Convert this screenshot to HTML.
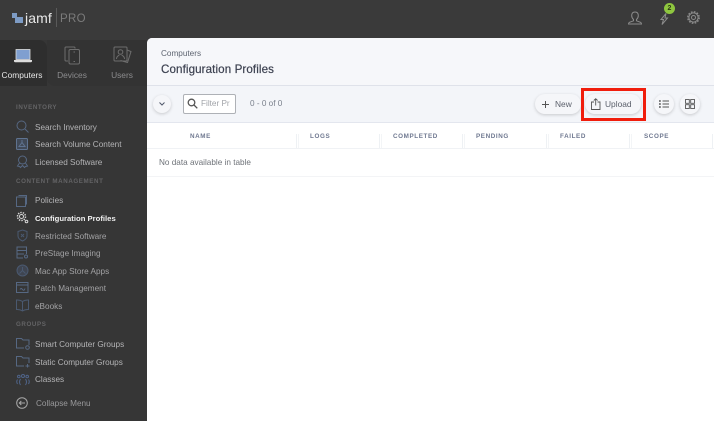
<!DOCTYPE html>
<html><head><meta charset="utf-8"><style>
html,body{margin:0;padding:0}
body{width:714px;height:421px;overflow:hidden;position:relative;background:#3a3a3a;font-family:"Liberation Sans",sans-serif}
#w{left:0;top:0;width:714px;height:421px;overflow:hidden;filter:blur(.3px)}
div,span{position:absolute;white-space:nowrap}
svg{position:absolute;overflow:visible;fill:none}
.n{left:35px;font-size:8.2px;color:#b4b4b6;line-height:10px}
.h{left:16px;font-size:6.2px;letter-spacing:.6px;color:#646466;font-weight:bold;line-height:8px}
.t{font-size:8.4px;line-height:10px;text-align:center}
.c{top:131px;font-size:6.3px;font-weight:bold;letter-spacing:.6px;color:#6f7890;line-height:8px}
.s{top:134px;height:14px;border-left:1px solid #eef1f4;border-right:1px solid #f3f5f7;box-sizing:content-box;width:1px}
.b{background:#f5f6f9;border-radius:50%;box-shadow:0 1px 3px rgba(0,0,0,.18)}
</style></head><body><div id="w">
<!-- tabs & sidebar -->
<div style="left:0;top:40px;width:147px;height:381px;background:#363636"></div>
<div style="left:47px;top:40px;width:100px;height:46px;background:#333;border-radius:0 0 0 8px"></div>
<div style="left:0;top:40px;width:47px;height:46px;background:#2e2e2e;border-radius:0 8px 0 0"></div>
<!-- logo -->
<svg style="left:12px;top:12px" width="12" height="12"><path d="M0 1h5v4h6v6H3V6H0z" fill="#7d9bc4"/></svg>
<div style="left:25px;top:9px;font-size:14px;line-height:18px;color:#e8e8e8;letter-spacing:.1px">jamf</div>
<div style="left:56px;top:8px;width:1px;height:19px;background:#5a5a5a"></div>
<div style="left:60px;top:13px;font-size:11.5px;line-height:13px;color:#7b7b7b;letter-spacing:.3px">PRO</div>
<!-- tab icons -->
<svg style="left:14px;top:49px" width="18" height="14"><rect x="2" y=".5" width="14" height="10" fill="#7f9fd0" stroke="#ddd" stroke-width=".8"/><path d="M0 11h18v1.300q0 .9-1 .9H1q-1 0-1-.9z" fill="#ddd"/></svg>
<svg style="left:64px;top:46px" width="17" height="19" stroke="#6e6e6e" stroke-width="1"><path d="M11 2.500V2q0-1-1-1H2q-1 0-1 1v12q0 1 1 1h2"/><rect x="5" y="3.500" width="10.500" height="14.500" rx="1.500"/><path d="M9.500 6h1.500M9.500 15.500h1.500"/></svg>
<svg style="left:113px;top:46px" width="19" height="19" stroke="#6e6e6e" stroke-width="1"><rect x="1" y="1" width="13" height="14" rx="1"/><circle cx="7.500" cy="6" r="2.300"/><path d="M3.500 13c0-3 2-3 2.800-4M11.500 13c0-3-2-3-2.800-4M14 4l4 1.500-3.500 11-7-2"/></svg>
<div class="t" style="left:0;top:70px;width:44px;color:#e6e6e6">Computers</div>
<div class="t" style="left:52px;top:70px;width:40px;color:#8c8c8e">Devices</div>
<div class="t" style="left:102px;top:70px;width:40px;color:#8c8c8e">Users</div>
<!-- sidebar text -->
<div class="h" style="top:104px">INVENTORY</div>
<div class="n" style="top:123px">Search Inventory</div>
<div class="n" style="top:140px">Search Volume Content</div>
<div class="n" style="top:158px">Licensed Software</div>
<div class="h" style="top:178px">CONTENT MANAGEMENT</div>
<div class="n" style="top:196px">Policies</div>
<div class="n" style="top:214px;color:#f0f0f0;font-weight:bold;font-size:7.7px">Configuration Profiles</div>
<div class="n" style="top:232px;color:#a2a2a4">Restricted Software</div>
<div class="n" style="top:249px;color:#a2a2a4">PreStage Imaging</div>
<div class="n" style="top:267px;color:#a2a2a4">Mac App Store Apps</div>
<div class="n" style="top:284px;color:#a2a2a4">Patch Management</div>
<div class="n" style="top:302px;color:#a2a2a4">eBooks</div>
<div class="h" style="top:321px">GROUPS</div>
<div class="n" style="top:340px">Smart Computer Groups</div>
<div class="n" style="top:358px">Static Computer Groups</div>
<div class="n" style="top:375px">Classes</div>
<div class="n" style="left:36px;top:399px;color:#99999b">Collapse Menu</div>
<!-- sidebar icons -->
<svg style="left:16px;top:120px" width="13" height="13" stroke="#566883" stroke-width="1"><circle cx="5.500" cy="5.500" r="4.500"/><path d="M9 9l3.500 3.500"/></svg>
<svg style="left:16px;top:138px" width="12" height="12" stroke="#5f7390" stroke-width="1"><rect x=".5" y=".5" width="11" height="11" rx="1" fill="#414a58"/><path d="M3 8.500l3-4 3 4zM6 2v3"/></svg>
<svg style="left:16px;top:155px" width="13" height="13" stroke="#566883" stroke-width="1"><circle cx="6.500" cy="5" r="4"/><path d="M3.500 8l-2 3 2 .5 1 1 2-2 2 2 1-1 2-.5-2-3"/></svg>
<svg style="left:16px;top:194px" width="12" height="13" stroke="#566883" stroke-width="1"><rect x=".5" y="3" width="9" height="9.500"/><path d="M2.500 1.500h8v9"/></svg>
<svg style="left:16px;top:211px" width="13" height="13" stroke="#d8d8d8" fill="none"><circle cx="5.500" cy="5.500" r="2" stroke-width="1"/><circle cx="5.500" cy="5.500" r="4" stroke-width="1.500" stroke-dasharray="1.400 1.100"/><circle cx="10.500" cy="10.500" r="1.300" stroke-width="1"/></svg>
<svg style="left:17px;top:229px" width="11" height="13" stroke="#4a5970" stroke-width="1"><path d="M5.500 1l4.500 1.500V7q0 3-4.500 5Q1 10 1 7V2.500z"/><path d="M4 5l3 3M7 5L4 8"/></svg>
<svg style="left:16px;top:246px" width="13" height="13" stroke="#566883" stroke-width="1"><path d="M7 12H1V1h9.500v7M1 4.500h9.500M1 8h7"/><circle cx="10" cy="10.500" r="1.500"/></svg>
<svg style="left:16px;top:264px" width="13" height="13" stroke="#4a5970" stroke-width="1"><circle cx="6.500" cy="6.500" r="5.500" fill="#3f4551"/><path d="M6.500 3v3.500L3.500 9.500M6.500 6.500l3 3"/></svg>
<svg style="left:16px;top:282px" width="13" height="12" stroke="#566883" stroke-width="1"><rect x=".5" y=".5" width="11.500" height="10"/><path d="M.5 3h11.500M4 7.500q1-2 2.500 0t2.500-1"/></svg>
<svg style="left:16px;top:299px" width="13" height="12" stroke="#4a5970" stroke-width="1"><path d="M6.500 2.500Q4 .8.500 1v9.500q3.500-.2 6 1.500 2.500-1.700 6-1.500V1Q9 .8 6.500 2.500zM6.500 2.500V12"/></svg>
<svg style="left:16px;top:337px" width="15" height="13" stroke="#566883" stroke-width="1"><path d="M8 11H.5V1.500h5L7 3h6v5"/><circle cx="11.500" cy="10.500" r="1.800"/></svg>
<svg style="left:16px;top:355px" width="15" height="13" stroke="#566883" stroke-width="1"><path d="M8 11H.5V1.500h5L7 3h6v5M11.500 9v3.500M9.500 11h4"/></svg>
<svg style="left:16px;top:373px" width="14" height="13" stroke="#4f6489" stroke-width="1"><circle cx="7" cy="3" r="1.500"/><circle cx="2.800" cy="3.500" r="1.300"/><circle cx="11.200" cy="3.500" r="1.300"/><path d="M4.500 6q-2 3 0 6M9.500 6q2 3 0 6M1.500 6.500q-1.500 2 0 4.500M12.500 6.500q1.500 2 0 4.500"/></svg>
<svg style="left:16px;top:397px" width="12" height="12" stroke="#a8a8a8" stroke-width="1"><circle cx="6" cy="6" r="5.300"/><path d="M9 6H3.500M5.300 4L3.300 6l2 2"/></svg>
<!-- top right icons -->
<svg style="left:628px;top:11px" width="14" height="14" stroke="#8c8c8c" stroke-width="1"><path d="M7 1c2.300 0 3.300 1.700 3.300 3.700S9 8 8.500 8.500V9.800l4 1.500q1 .5 1 1.700H.5q0-1.200 1-1.700l4-1.500V8.500C5 8 3.700 6.700 3.700 4.700S4.700 1 7 1z"/></svg>
<svg style="left:660px;top:13px" width="9" height="12" stroke="#8c8c8c" stroke-width="1"><path d="M6 .5L1 6.500h2.500L2 11.500l5.500-6.500H5z"/></svg>
<div style="left:664px;top:3px;width:11px;height:11px;border-radius:50%;background:#8ec63f;color:#2c3a12;font-size:7px;font-weight:bold;line-height:11px;text-align:center">2</div>
<svg style="left:687px;top:11px" width="13" height="13" stroke="#8c8c8c"><circle cx="6.500" cy="6.500" r="2" stroke-width="1"/><circle cx="6.500" cy="6.500" r="4.600" stroke-width="1"/><circle cx="6.500" cy="6.500" r="5.700" stroke-width="1.400" stroke-dasharray="1.700 1.300"/></svg>
<!-- main -->
<div style="left:147px;top:38px;width:567px;height:383px;background:#fff;border-radius:5px 0 0 0;overflow:hidden">
 <div style="left:0;top:0;width:567px;height:47px;background:#f6f7fa"></div>
 <div style="left:0;top:47px;width:567px;height:1px;background:#dfe2ea"></div>
 <div style="left:0;top:48px;width:567px;height:36px;background:#f3f5f9"></div>
 <div style="left:0;top:84px;width:567px;height:1px;background:#e3e6ee"></div>
 <div style="left:0;top:110px;width:567px;height:1px;background:#f0f2f5"></div>
 <div style="left:0;top:138px;width:567px;height:1px;background:#f3f4f6"></div>
</div>
<div style="left:161px;top:48px;font-size:8.2px;color:#5e6470;line-height:11px">Computers</div>
<div style="left:161px;top:63px;font-size:11.6px;color:#3c4150;line-height:14px;-webkit-text-stroke:.2px #3c4150;letter-spacing:.1px">Configuration Profiles</div>
<!-- toolbar -->
<div class="b" style="left:153px;top:95px;width:18px;height:18px"></div>
<svg style="left:159px;top:102px" width="6" height="4" stroke="#50586a" stroke-width="1"><path d="M.5.500L3 3 5.500.500"/></svg>
<div style="left:183px;top:94px;width:51px;height:18px;border:1px solid #aeb1b6;border-radius:2px;background:#fff"></div>
<svg style="left:187px;top:98px" width="11" height="11" stroke="#555" stroke-width="1.300"><circle cx="4.500" cy="4.500" r="3.300"/><path d="M7 7l3.300 3.300"/></svg>
<div style="left:201px;top:99px;width:31px;overflow:hidden;font-size:8.2px;color:#a0a3a8;line-height:10px">Filter Pr</div>
<div style="left:250px;top:99px;font-size:8.2px;color:#7a808c;line-height:10px">0 - 0 of 0</div>
<div style="left:535px;top:94px;width:46px;height:20px;border-radius:10px;background:#f5f6f9;box-shadow:0 1px 3px rgba(0,0,0,.18)"></div>
<svg style="left:542px;top:101px" width="7" height="7" stroke="#555" stroke-width="1"><path d="M3.500 0v7M0 3.500h7"/></svg>
<div style="left:555px;top:99px;font-size:8.4px;color:#5a5f6a;line-height:10px">New</div>
<div style="left:585px;top:94px;width:56px;height:20px;border-radius:10px;background:#f5f6f9;box-shadow:0 1px 3px rgba(0,0,0,.18)"></div>
<svg style="left:591px;top:98px" width="10" height="12" stroke="#555" stroke-width=".9"><path d="M3 4H.5v7.500h8.500V4H6.500M4.700 7.500V.7M2.800 2.500L4.700.7l1.900 1.800"/></svg>
<div style="left:605px;top:99px;font-size:8.4px;color:#5a5f6a;line-height:10px">Upload</div>
<div style="left:581px;top:88px;width:65px;height:33px;border:3px solid #f01d0c;box-sizing:border-box"></div>
<div class="b" style="left:654px;top:94px;width:20px;height:20px"></div>
<svg style="left:659px;top:100px" width="10" height="8" stroke="#555"><path d="M3.500 1H10M3.500 4H10M3.500 7H10" stroke-width=".9"/><path d="M0 1h1.800M0 4h1.800M0 7h1.800" stroke-width="1.500"/></svg>
<div class="b" style="left:680px;top:94px;width:20px;height:20px"></div>
<svg style="left:685px;top:99px" width="10" height="10" stroke="#555" stroke-width=".9"><rect x=".5" y=".5" width="3.800" height="3.800"/><rect x="5.700" y=".5" width="3.800" height="3.800"/><rect x=".5" y="5.700" width="3.800" height="3.800"/><rect x="5.700" y="5.700" width="3.800" height="3.800"/></svg>
<!-- table head -->
<div class="c" style="left:190px;top:133px">NAME</div>
<div class="c" style="left:310px;top:133px">LOGS</div>
<div class="c" style="left:393px;top:133px">COMPLETED</div>
<div class="c" style="left:476px;top:133px">PENDING</div>
<div class="c" style="left:560px;top:133px">FAILED</div>
<div class="c" style="left:644px;top:133px">SCOPE</div>
<div class="s" style="left:296px"></div>
<div class="s" style="left:379px"></div>
<div class="s" style="left:462px"></div>
<div class="s" style="left:546px"></div>
<div class="s" style="left:629px"></div>
<div class="s" style="left:712px"></div>
<div style="left:159px;top:158px;font-size:8.2px;color:#6e7278;line-height:10px">No data available in table</div>
</div></body></html>
